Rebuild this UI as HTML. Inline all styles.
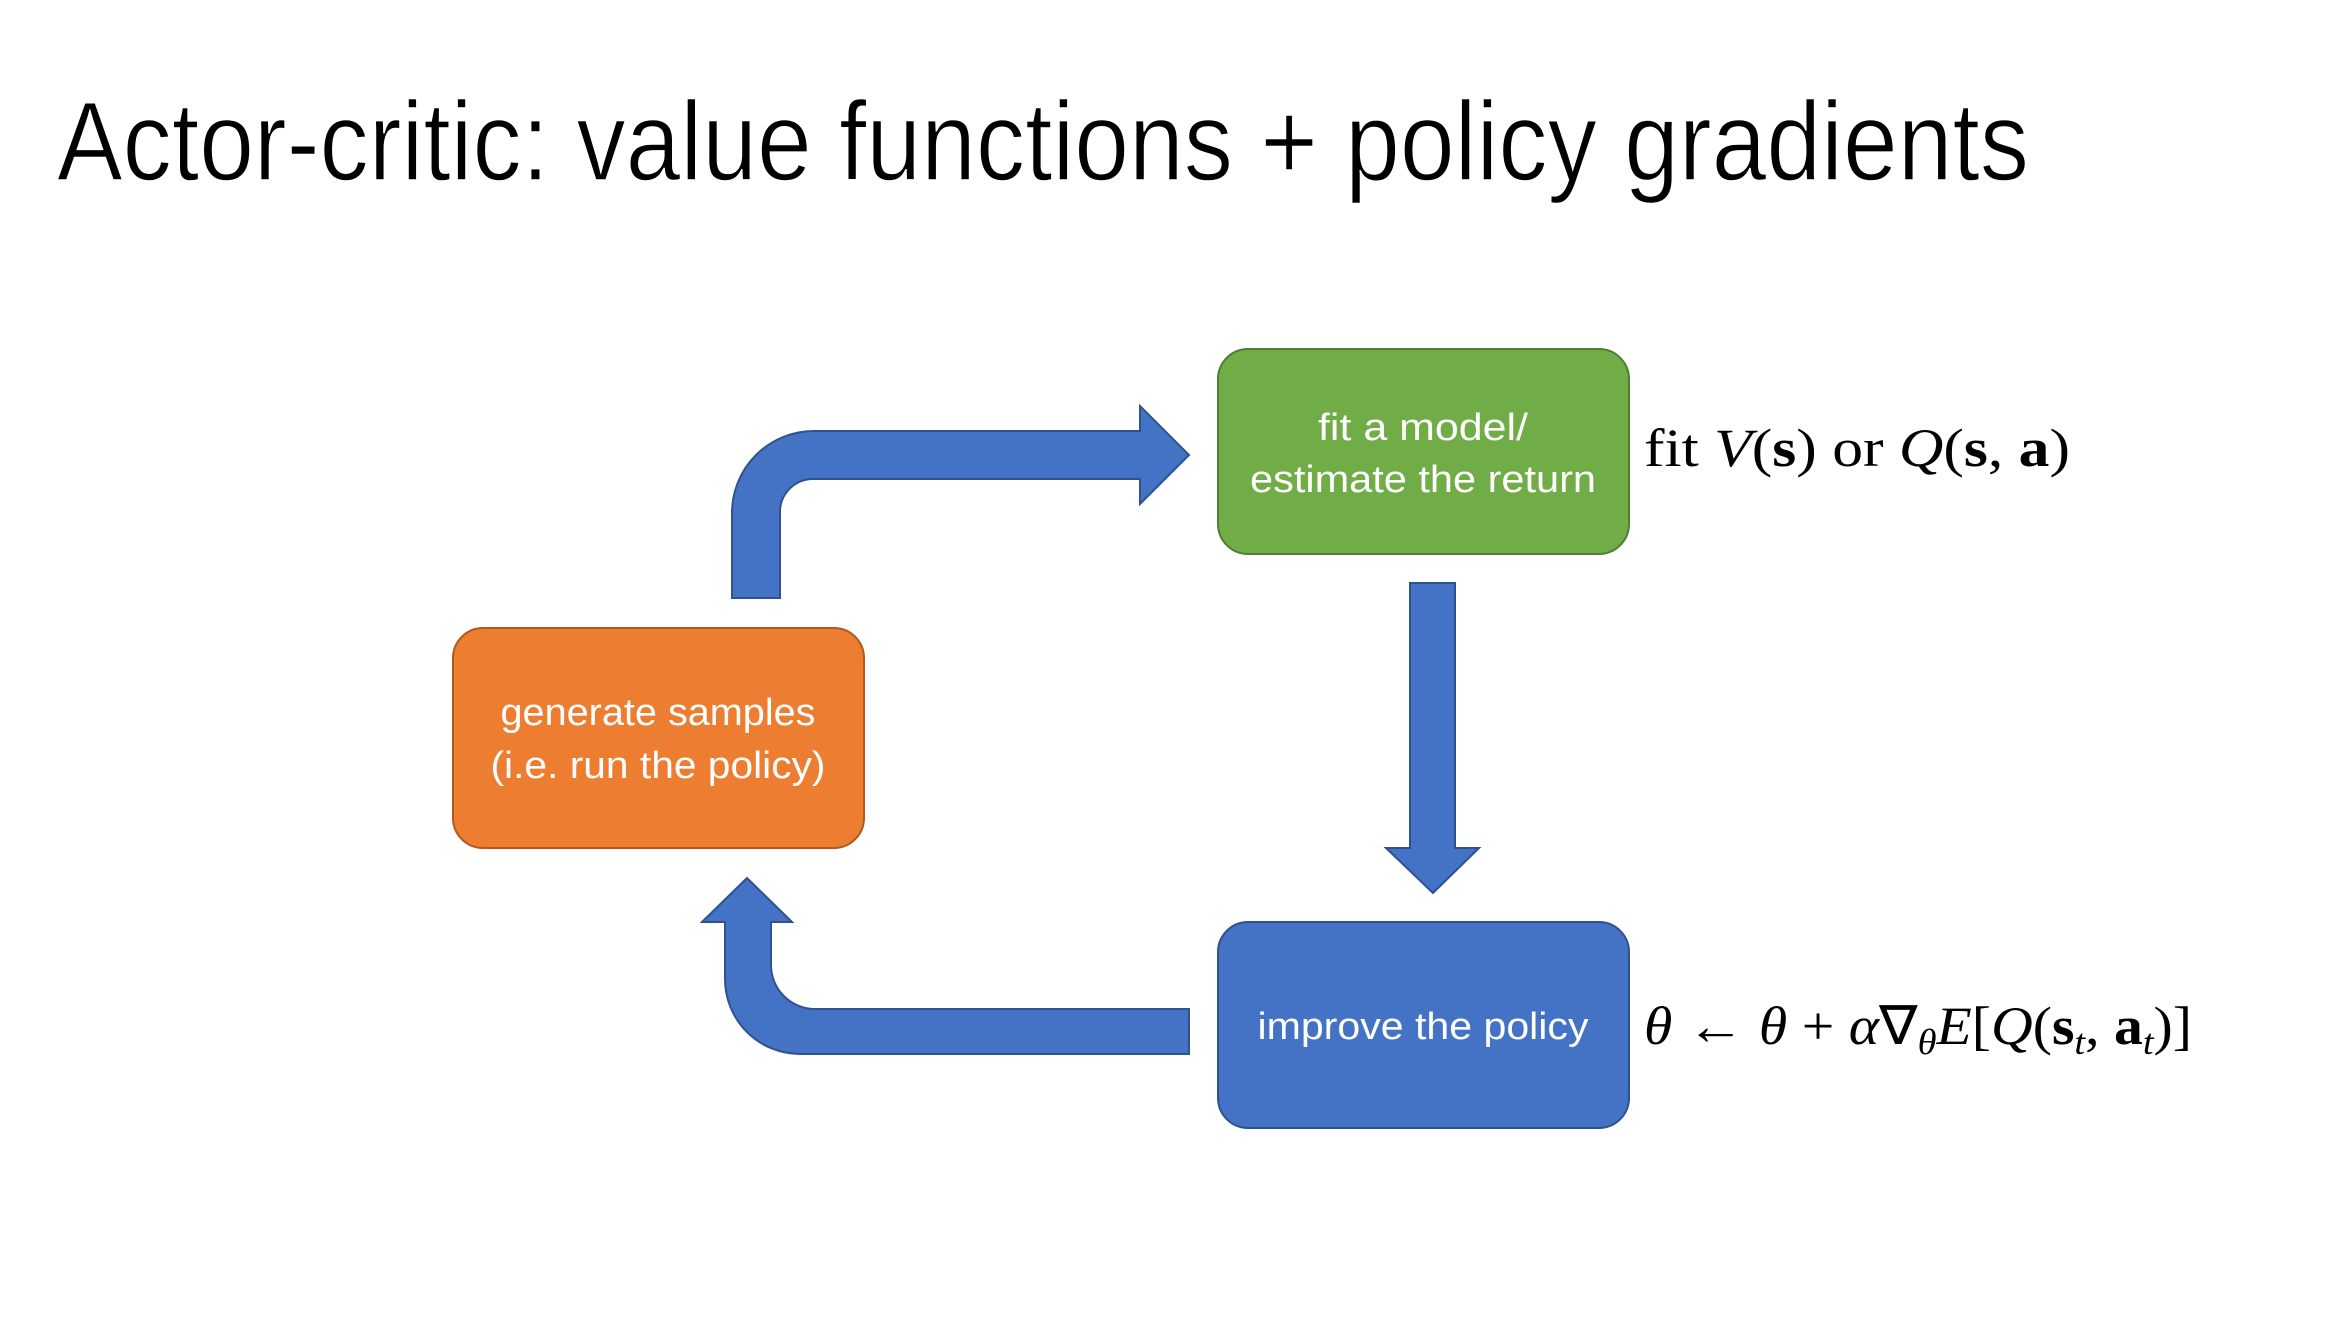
<!DOCTYPE html>
<html><head><meta charset="utf-8"><style>
html,body{margin:0;padding:0;background:#fff;width:2346px;height:1320px;overflow:hidden}
</style></head><body>
<svg width="2346" height="1320" viewBox="0 0 2346 1320" xmlns="http://www.w3.org/2000/svg">
<text x="57" y="180" font-family="Liberation Sans, sans-serif" font-size="112" textLength="1972" lengthAdjust="spacingAndGlyphs" fill="#000" stroke="#fff" stroke-width="1.5">Actor-critic: value functions + policy gradients</text>
<g transform="translate(-3,-2)">
<path d="M735,600 L735,515 A82,82 0 0 1 817,433 L1143,433 L1143,408 L1192,457 L1143,506 L1143,481 L816,481 A33,33 0 0 0 783,514 L783,600 Z" fill="#4472C4" stroke="#2F528F" stroke-width="2"/>
<path d="M1413,585 L1458,585 L1458,850 L1482,850 L1436,895 L1389,850 L1413,850 Z" fill="#4472C4" stroke="#2F528F" stroke-width="2"/>
<path d="M1192,1011 L818,1011 A44,44 0 0 1 774,967 L774,924 L795,924 L750,880 L705,924 L728,924 L728,981 A75,75 0 0 0 803,1056 L1192,1056 Z" fill="#4472C4" stroke="#2F528F" stroke-width="2"/>

<rect x="1221" y="351" width="411" height="205" rx="30" fill="#70AD47" stroke="#507E32" stroke-width="2"/>
<rect x="456" y="630" width="411" height="220" rx="30" fill="#ED7D31" stroke="#AE5A21" stroke-width="2"/>
<rect x="1221" y="924" width="411" height="206" rx="30" fill="#4472C4" stroke="#2F528F" stroke-width="2"/>

<g font-family="Liberation Sans, sans-serif" font-size="38" fill="#fff" text-anchor="middle">
<text x="1426" y="442" textLength="210" lengthAdjust="spacingAndGlyphs">fit a model/</text>
<text x="1426" y="494" textLength="346" lengthAdjust="spacingAndGlyphs">estimate the return</text>
<text x="661" y="727" textLength="315" lengthAdjust="spacingAndGlyphs">generate samples</text>
<text x="661" y="780" textLength="335" lengthAdjust="spacingAndGlyphs">(i.e. run the policy)</text>
<text x="1426" y="1041" textLength="331" lengthAdjust="spacingAndGlyphs">improve the policy</text>
</g>

<g font-family="Liberation Serif, serif" font-size="54" fill="#000">
<text x="1647" y="468" textLength="426" lengthAdjust="spacingAndGlyphs">fit <tspan font-style="italic">V</tspan>(<tspan font-weight="bold">s</tspan>) or <tspan font-style="italic">Q</tspan>(<tspan font-weight="bold">s</tspan>, <tspan font-weight="bold">a</tspan>)</text>
<text x="1647" y="1046" textLength="548" lengthAdjust="spacingAndGlyphs"><tspan font-style="italic">θ</tspan> ← <tspan font-style="italic">θ</tspan> + <tspan font-style="italic">α</tspan>∇<tspan font-style="italic" font-size="36" dy="10">θ</tspan><tspan font-style="italic" dy="-10">E</tspan>[<tspan font-style="italic">Q</tspan>(<tspan font-weight="bold">s</tspan><tspan font-style="italic" font-size="36" dy="10">t</tspan><tspan dy="-10">, </tspan><tspan font-weight="bold">a</tspan><tspan font-style="italic" font-size="36" dy="10">t</tspan><tspan dy="-10">)]</tspan></text>
</g>
</g>
</svg>
</body></html>
